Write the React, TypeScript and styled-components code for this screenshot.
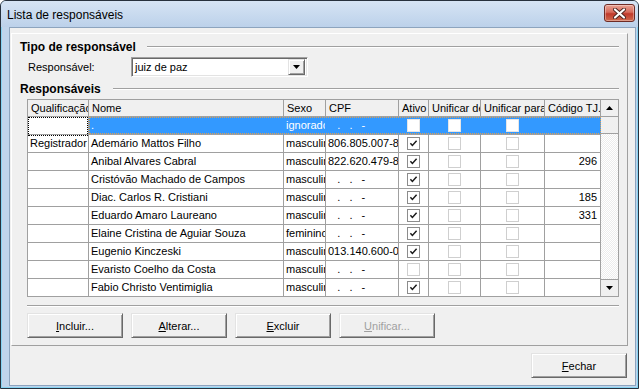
import React from "react";
import styled, { createGlobalStyle } from "styled-components";

const GlobalStyle = createGlobalStyle`
  html, body { margin: 0; padding: 0; background: #fff; }
  body {
    width: 639px;
    height: 389px;
    overflow: hidden;
    font-family: "Liberation Sans", Arial, sans-serif;
    font-size: 11px;
    color: #000;
  }
  * { box-sizing: border-box; }
`;

const COLS = [61, 195, 42, 73, 30, 52, 64, 56];
const GRID_LINE = "#a0a0a0";

const Window = styled.div`
  width: 639px;
  height: 389px;
  display: flex;
  flex-direction: column;
  background: #c0d4eb;
  border: 1px solid #27313d;
  border-radius: 6px 6px 0 0;
  box-shadow: inset 0 0 0 1px #86d3f2;
`;

const TitleBar = styled.div`
  height: 26px;
  flex-shrink: 0;
  display: flex;
  justify-content: space-between;
  align-items: flex-start;
  padding: 3px 3px 0 6px;
  background: linear-gradient(to bottom, #d6e4f4, #bcd1ea);
  border-radius: 5px 5px 0 0;
`;

const Title = styled.div`
  margin-top: 4px;
  font-size: 12px;
  line-height: 15px;
`;

const CloseButton = styled.div`
  width: 31px;
  height: 18px;
  display: flex;
  align-items: center;
  justify-content: center;
  border: 1px solid #6e2b25;
  border-radius: 3px;
  background: linear-gradient(to bottom, #e8a293 0%, #d66b5c 45%, #c0392b 55%, #cf6a4e 100%);
  box-shadow: inset 0 0 0 1px rgba(255, 255, 255, 0.35);
`;

const Client = styled.div`
  flex: 1;
  margin: 0 2px 2px 8px;
  display: flex;
  flex-direction: column;
  background: #f0f0f0;
  border: 1px solid #8da4be;
`;

const Panel = styled.div`
  margin: 5px 7px 0 1px;
  padding: 6px 8px 7px 8px;
  border: 1px solid;
  border-color: #fff ${GRID_LINE} ${GRID_LINE} #fff;
`;

const Heading = styled.div`
  display: flex;
  align-items: center;
  height: 14px;
  line-height: 14px;
  font-size: 12px;
  font-weight: bold;
  white-space: nowrap;
`;

const HeadingLine = styled.div<{ $gap: number }>`
  flex: 1;
  margin-left: ${(p) => p.$gap}px;
  border-top: 1px solid ${GRID_LINE};
  border-bottom: 1px solid #fff;
`;

const FieldRow = styled.div`
  margin: 3px 0 5px 0;
  display: flex;
  align-items: center;
  height: 20px;
  padding-left: 8px;
`;

const Label = styled.div`
  width: 103px;
`;

const Combo = styled.div`
  width: 177px;
  height: 20px;
  display: flex;
  align-items: center;
  background: #fff;
  border: 1px solid;
  border-color: ${GRID_LINE} #fff #fff ${GRID_LINE};
  box-shadow: inset 1px 1px #696969, inset -1px -1px #e3e3e3;
  padding: 2px 2px 2px 3px;
`;

const ComboText = styled.div`
  flex: 1;
`;

const ComboButton = styled.div`
  width: 17px;
  height: 16px;
  display: flex;
  align-items: center;
  justify-content: center;
  background: #f0f0f0;
  border: 1px solid;
  border-color: #e3e3e3 #696969 #696969 #e3e3e3;
  box-shadow: inset 1px 1px #fff, inset -1px -1px ${GRID_LINE};
`;

const Grid = styled.div`
  margin: 3px 0 0 7px;
  width: 592px;
  height: 198px;
  display: flex;
  background: #fff;
  border: 1px solid ${GRID_LINE};
`;

const Table = styled.div`
  width: 573px;
  height: 100%;
  overflow: hidden;
  display: flex;
  flex-direction: column;
`;

const HeaderRow = styled.div`
  display: flex;
  height: 17px;
  flex-shrink: 0;
  background: #f0f0f0;
`;

const HeaderCell = styled.div<{ $w: number }>`
  width: ${(p) => p.$w}px;
  flex-shrink: 0;
  padding-left: 3px;
  line-height: 16px;
  overflow: hidden;
  white-space: nowrap;
  border-right: 1px solid ${GRID_LINE};
  border-bottom: 1px solid ${GRID_LINE};
`;

const Row = styled.div`
  display: flex;
  height: 18px;
  flex-shrink: 0;
`;

const Cell = styled.div<{ $w: number; $align?: string; $sel?: boolean }>`
  width: ${(p) => p.$w}px;
  flex-shrink: 0;
  display: flex;
  align-items: center;
  justify-content: ${(p) =>
    p.$align === "center" ? "center" : p.$align === "right" ? "flex-end" : "flex-start"};
  padding: 0 3px 0 2px;
  overflow: hidden;
  white-space: pre;
  line-height: 17px;
  border-right: 1px solid ${(p) => (p.$sel ? "#3399ff" : GRID_LINE)};
  border-bottom: 1px solid ${GRID_LINE};
`;

const FocusCell = styled.div<{ $w: number }>`
  width: ${(p) => p.$w}px;
  flex-shrink: 0;
  border-right: 1px solid ${GRID_LINE};
  border-bottom: 1px solid ${GRID_LINE};
  &::after {
    content: "";
    display: block;
    height: 100%;
    border: 1px dotted #000;
  }
`;

const SelBlock = styled.div`
  position: relative;
  display: flex;
  background: #3399ff;
  color: #fff;
  &::after {
    content: "";
    position: absolute;
    left: 0;
    top: 0;
    right: 0;
    bottom: 1px;
    border: 1px dotted #e0a050;
    pointer-events: none;
  }
`;

const Box = styled.div<{ $variant: "active" | "disabled" | "selected" }>`
  width: 13px;
  height: 13px;
  display: flex;
  align-items: center;
  justify-content: center;
  background: #fff;
  border: 1px solid
    ${(p) =>
      p.$variant === "active" ? "#8c8c8c" : p.$variant === "disabled" ? "#cfcfcf" : "#e6e6e6"};
`;

const ScrollBar = styled.div`
  width: 17px;
  display: flex;
  flex-direction: column;
  background: repeating-conic-gradient(#ffffff 0 25%, #ececec 0 50%) 0 0 / 2px 2px;
`;

const ScrollButton = styled.div<{ $down?: boolean }>`
  height: 17px;
  flex-shrink: 0;
  display: flex;
  align-items: center;
  justify-content: center;
  background: #f0f0f0;
  ${(p) => (p.$down ? "margin-top: auto;" : "")}
  border-${(p) => (p.$down ? "top" : "bottom")}: 1px solid ${GRID_LINE};
`;

const ScrollThumb = styled.div`
  height: 17px;
  background: #f0f0f0;
  border-bottom: 1px solid ${GRID_LINE};
`;

const Separator = styled.div`
  margin: 8px 0 0 7px;
  width: 592px;
  border-top: 1px solid ${GRID_LINE};
  border-bottom: 1px solid #fff;
`;

const ButtonRow = styled.div`
  margin-top: 6px;
  padding-left: 7px;
  display: flex;
  gap: 8px;
`;

const Button = styled.button`
  width: 96px;
  height: 25px;
  padding: 0;
  font-family: "Liberation Sans", Arial, sans-serif;
  font-size: 11px;
  color: #000;
  background: #f0f0f0;
  border: 1px solid;
  border-color: #e3e3e3 #696969 #696969 #e3e3e3;
  box-shadow: inset 1px 1px #fff, inset -1px -1px ${GRID_LINE};
  &:disabled {
    color: #a0a0a0;
  }
`;

const BottomBar = styled.div`
  flex: 1;
  display: flex;
  justify-content: flex-end;
  padding: 7px 8px 0 0;
`;

function Check() {
  return (
    <svg width="9" height="9" viewBox="0 0 9 9">
      <path d="M1.4 4.3 L3.4 6.5 L7.6 1.8" fill="none" stroke="#1a1a1a" strokeWidth="1.5" />
    </svg>
  );
}

function CheckBox({ checked, variant }: { checked?: boolean; variant: "active" | "disabled" | "selected" }) {
  return <Box $variant={variant}>{checked && <Check />}</Box>;
}

function Arrow({ down }: { down?: boolean }) {
  return (
    <svg width="7" height="4" viewBox="0 0 7 4">
      <polygon points={down ? "0,0 7,0 3.5,4" : "0,4 7,4 3.5,0"} fill="#000" />
    </svg>
  );
}

type Person = {
  qual: string;
  nome: string;
  sexo: string;
  cpf: string;
  ativo: boolean;
  codigo: string;
};

const EMPTY_CPF = "   .   .   -";

const people: Person[] = [
  { qual: "Registrador", nome: "Ademário Mattos Filho", sexo: "masculino", cpf: "806.805.007-82", ativo: true, codigo: "" },
  { qual: "", nome: "Anibal Alvares Cabral", sexo: "masculino", cpf: "822.620.479-87", ativo: true, codigo: "296" },
  { qual: "", nome: "Cristóvão Machado de Campos", sexo: "masculino", cpf: EMPTY_CPF, ativo: true, codigo: "" },
  { qual: "", nome: "Diac. Carlos R. Cristiani", sexo: "masculino", cpf: EMPTY_CPF, ativo: true, codigo: "185" },
  { qual: "", nome: "Eduardo Amaro Laureano", sexo: "masculino", cpf: EMPTY_CPF, ativo: true, codigo: "331" },
  { qual: "", nome: "Elaine Cristina de Aguiar Souza", sexo: "feminino", cpf: EMPTY_CPF, ativo: true, codigo: "" },
  { qual: "", nome: "Eugenio Kinczeski", sexo: "masculino", cpf: "013.140.600-04", ativo: true, codigo: "" },
  { qual: "", nome: "Evaristo Coelho da Costa", sexo: "masculino", cpf: EMPTY_CPF, ativo: false, codigo: "" },
  { qual: "", nome: "Fabio Christo Ventimiglia", sexo: "masculino", cpf: EMPTY_CPF, ativo: true, codigo: "" },
];

const headers = ["Qualificação", "Nome", "Sexo", "CPF", "Ativo", "Unificar de", "Unificar para", "Código TJ."];

export default function App() {
  return (
    <>
      <GlobalStyle />
      <Window>
        <TitleBar>
          <Title>Lista de responsáveis</Title>
          <CloseButton>
            <svg width="13" height="11" viewBox="0 0 13 11">
              <path
                d="M2 1.5 L11 9.5 M11 1.5 L2 9.5"
                stroke="#4a2420"
                strokeWidth="4"
                strokeLinecap="round"
              />
              <path
                d="M2 1.5 L11 9.5 M11 1.5 L2 9.5"
                stroke="#fff"
                strokeWidth="2.2"
                strokeLinecap="round"
              />
            </svg>
          </CloseButton>
        </TitleBar>
        <Client>
          <Panel>
            <Heading>
              Tipo de responsável
              <HeadingLine $gap={11} />
            </Heading>
            <FieldRow>
              <Label>Responsável:</Label>
              <Combo>
                <ComboText>juiz de paz</ComboText>
                <ComboButton>
                  <Arrow down />
                </ComboButton>
              </Combo>
            </FieldRow>
            <Heading>
              Responsáveis
              <HeadingLine $gap={12} />
            </Heading>
            <Grid>
              <Table>
                <HeaderRow>
                  {headers.map((h, i) => (
                    <HeaderCell key={h} $w={COLS[i]}>
                      {h}
                    </HeaderCell>
                  ))}
                </HeaderRow>
                <Row>
                  <FocusCell $w={COLS[0]} />
                  <SelBlock>
                    <Cell $w={COLS[1]} $sel>.</Cell>
                    <Cell $w={COLS[2]} $sel>ignorado</Cell>
                    <Cell $w={COLS[3]} $sel>{EMPTY_CPF}</Cell>
                    <Cell $w={COLS[4]} $sel $align="center">
                      <CheckBox variant="selected" />
                    </Cell>
                    <Cell $w={COLS[5]} $sel $align="center">
                      <CheckBox variant="selected" />
                    </Cell>
                    <Cell $w={COLS[6]} $sel $align="center">
                      <CheckBox variant="selected" />
                    </Cell>
                    <Cell $w={COLS[7]} $sel />
                  </SelBlock>
                </Row>
                {people.map((p) => (
                  <Row key={p.nome}>
                    <Cell $w={COLS[0]}>{p.qual}</Cell>
                    <Cell $w={COLS[1]}>{p.nome}</Cell>
                    <Cell $w={COLS[2]}>{p.sexo}</Cell>
                    <Cell $w={COLS[3]}>{p.cpf}</Cell>
                    <Cell $w={COLS[4]} $align="center">
                      <CheckBox variant={p.ativo ? "active" : "disabled"} checked={p.ativo} />
                    </Cell>
                    <Cell $w={COLS[5]} $align="center">
                      <CheckBox variant="disabled" />
                    </Cell>
                    <Cell $w={COLS[6]} $align="center">
                      <CheckBox variant="disabled" />
                    </Cell>
                    <Cell $w={COLS[7]} $align="right">{p.codigo}</Cell>
                  </Row>
                ))}
              </Table>
              <ScrollBar>
                <ScrollButton>
                  <Arrow />
                </ScrollButton>
                <ScrollThumb />
                <ScrollButton $down>
                  <Arrow down />
                </ScrollButton>
              </ScrollBar>
            </Grid>
            <Separator />
            <ButtonRow>
              <Button>
                <u>I</u>ncluir...
              </Button>
              <Button>
                <u>A</u>lterar...
              </Button>
              <Button>
                <u>E</u>xcluir
              </Button>
              <Button disabled>
                <u>U</u>nificar...
              </Button>
            </ButtonRow>
          </Panel>
          <BottomBar>
            <Button>
              <u>F</u>echar
            </Button>
          </BottomBar>
        </Client>
      </Window>
    </>
  );
}
